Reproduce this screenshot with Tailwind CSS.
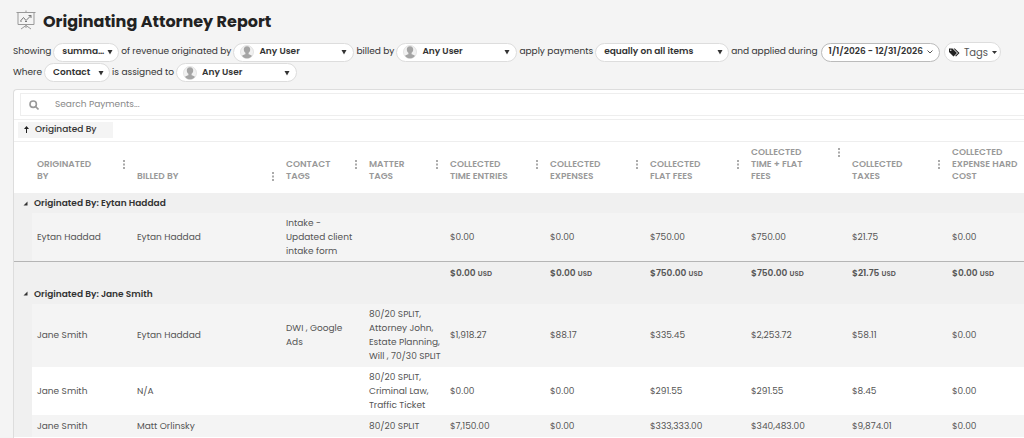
<!DOCTYPE html>
<html lang="en">
<head>
  <meta charset="UTF-8" />
  <meta name="viewport" content="width=device-width, initial-scale=1.0" />
  <title>Originating Attorney Report</title>
  <script src="https://cdn.jsdelivr.net/npm/@tailwindcss/browser@4"></script>
</head>
<body class="bg-[#f4f4f4] text-[#333] min-h-screen overflow-x-hidden font-['Poppins','Inter',sans-serif] text-[9px] flex flex-col">

  <!-- Shared icons -->
  <svg class="hidden">
    <symbol id="avatar" viewBox="0 0 14 14">
      <circle cx="7" cy="7" r="6.5" fill="#f1f1f1" stroke="#ddd" stroke-width="0.8" />
      <path d="M7 1.2c-2.200 0-3.200 1.400-3.200 3.300 0 1.500.7 2.700 1.600 3.300v1.400c-1.400.4-2.700.8-3.300 1.700C3.300 12.400 5 13.300 7 13.300s3.700-.9 4.900-2.400c-.6-.9-1.900-1.300-3.300-1.700V7.800c.9-.6 1.600-1.800 1.600-3.300 0-1.900-1-3.300-3.200-3.300z" fill="#a5a5a5" />
    </symbol>
    <symbol id="arrow" viewBox="0 0 6 6">
      <path d="M.5 1h5L3 5.500z" fill="#333" />
    </symbol>
    <symbol id="dots" viewBox="0 0 4 9">
      <path d="M1 0h2v2H1zM1 3.500h2v2H1zM1 7h2v2H1z" fill="#aaa" />
    </symbol>
    <symbol id="collapse" viewBox="0 0 5 5">
      <path d="M4.500.5v4h-4z" fill="#333" />
    </symbol>
  </svg>

  <!-- Title -->
  <header class="flex items-center gap-[7px] px-4 pt-2 h-[35px]">
    <svg class="size-5 mb-1" viewBox="0 0 20 20" fill="none" stroke="#999" stroke-width="1">
      <path d="M10 .5v2M.5 2.500h19M2 2.500v12h16v-12M10 14.500v3.500M10 15.500l-5 3.500M10 15.500l5 3.500" />
      <path d="M4.500 11l3-3.500 2.500 3 5-5M12.500 5.500H15V8M4.500 11.500h1M9 11.500h2" stroke="#777" />
    </svg>
    <h1 class="text-base font-bold text-[#222]">Originating Attorney Report</h1>
  </header>

  <!-- Filters -->
  <form class="flex flex-col gap-px pl-[13px] pt-[7px] pb-[7px]">
    <div class="flex items-center gap-[2px] whitespace-nowrap">
      <label for="view">Showing</label>
      <div class="flex items-center w-[66px] h-[19px] pl-2 pr-[5px] rounded-full border border-[#ddd] bg-white">
        <select id="view" class="appearance-none flex-1 min-w-0 truncate font-semibold outline-none">
          <option>summary</option>
          <option>details</option>
        </select>
        <svg class="size-[6px] ml-[2px] shrink-0"><use href="#arrow" /></svg>
      </div>
      <label for="originatedBy">of revenue originated by</label>
      <div class="flex items-center gap-[5px] w-[121px] h-[19px] px-[6px] rounded-full border border-[#ddd] bg-white">
        <svg class="size-[14px] shrink-0"><use href="#avatar" /></svg>
        <select id="originatedBy" class="appearance-none flex-1 min-w-0 font-semibold outline-none">
          <option>Any User</option>
        </select>
        <svg class="size-[6px] shrink-0"><use href="#arrow" /></svg>
      </div>
      <label for="billedBy">billed by</label>
      <div class="flex items-center gap-[5px] w-[121px] h-[19px] px-[6px] rounded-full border border-[#ddd] bg-white">
        <svg class="size-[14px] shrink-0"><use href="#avatar" /></svg>
        <select id="billedBy" class="appearance-none flex-1 min-w-0 font-semibold outline-none">
          <option>Any User</option>
        </select>
        <svg class="size-[6px] shrink-0"><use href="#arrow" /></svg>
      </div>
      <label for="apply">apply payments</label>
      <div class="flex items-center w-[134px] h-[19px] pl-2 pr-[5px] rounded-full border border-[#ddd] bg-white">
        <select id="apply" class="appearance-none flex-1 min-w-0 font-semibold outline-none">
          <option>equally on all items</option>
        </select>
        <svg class="size-[6px] shrink-0"><use href="#arrow" /></svg>
      </div>
      <label for="period">and applied during</label>
      <button id="period" type="button" class="flex items-center justify-between w-[119px] h-[19px] ml-[2px] px-[6px] rounded-full border border-[#bbb] bg-white font-semibold">
        1/1/2026 - 12/31/2026
        <svg class="size-[6px]" viewBox="0 0 6 6" fill="none" stroke="#555"><path d="M.5 1.500L3 4l2.500-2.500" /></svg>
      </button>
      <button type="button" class="flex items-center justify-center gap-1 w-[57px] h-5 ml-[2px] rounded-full border border-[#ddd] bg-white text-[10px] text-[#555]">
        <svg class="w-[11px] h-[9px]" viewBox="0 0 11 9" fill="#222">
          <path fill-rule="evenodd" d="M0 .5h3.500L8 5 4.500 8.500 0 4zM1.800 1.500a.7.700 0 1 0 0 1.400.7.700 0 0 0 0-1.400z" />
          <path d="M4.500.5h1.300L10.500 5 7 8.500l-.8-.7L9 5z" />
        </svg>
        Tags
        <svg class="w-[5px] h-[3px]" viewBox="0 0 5 3" fill="#333"><path d="M0 0h5L2.500 3z" /></svg>
      </button>
    </div>
    <div class="flex items-center gap-[2px] whitespace-nowrap">
      <label for="where">Where</label>
      <div class="flex items-center w-[66px] h-[19px] pl-2 pr-[5px] rounded-full border border-[#ddd] bg-white">
        <select id="where" class="appearance-none flex-1 min-w-0 font-semibold outline-none">
          <option>Contact</option>
          <option>Matter</option>
        </select>
        <svg class="size-[6px] shrink-0"><use href="#arrow" /></svg>
      </div>
      <label for="assignedTo">is assigned to</label>
      <div class="flex items-center gap-[5px] w-[121px] h-[19px] px-[6px] rounded-full border border-[#ddd] bg-white">
        <svg class="size-[14px] shrink-0"><use href="#avatar" /></svg>
        <select id="assignedTo" class="appearance-none flex-1 min-w-0 font-semibold outline-none">
          <option>Any User</option>
        </select>
        <svg class="size-[6px] shrink-0"><use href="#arrow" /></svg>
      </div>
    </div>
  </form>

  <!-- Report grid -->
  <main class="flex-1 ml-[13px] border-l border-t border-[#ddd] rounded-tl-sm bg-white">
    <div class="py-[3px] pl-[6px]">
      <div class="flex items-center gap-4 h-[23px] pl-2 border border-r-0 border-[#eee]">
        <svg class="size-[10px]" viewBox="0 0 10 10" fill="none" stroke="#999" stroke-width="1.600"><circle cx="4.200" cy="4.200" r="3.200" /><path d="M6.500 6.500l3 3" /></svg>
        <input type="search" aria-label="Search Payments" placeholder="Search Payments..." class="flex-1 outline-none placeholder:text-[#888]" />
      </div>
    </div>
    <div class="flex items-center h-[23px] pl-1 border-y border-[#eee]">
      <button type="button" class="flex items-center gap-[6px] w-[95px] h-4 mb-[2px] px-[6px] bg-[#f4f4f4] font-medium">
        <svg class="w-[5px] h-[7px]" viewBox="0 0 5 7" fill="#222"><path d="M2.500 0L5 3H3v4H2V3H0z" /></svg>
        Originated By
      </button>
    </div>

    <table class="table-fixed w-full text-left leading-[14px] text-[#555]">
      <colgroup>
        <col class="w-[18px]" />
        <col class="w-[100px]" />
        <col class="w-[149px]" />
        <col class="w-[83px]" />
        <col class="w-[81px]" />
        <col class="w-[100px]" />
        <col class="w-[100px]" />
        <col class="w-[101px]" />
        <col class="w-[101px]" />
        <col class="w-[100px]" />
        <col />
      </colgroup>
      <thead class="text-[#999] leading-3">
        <tr class="h-[51px] align-bottom">
          <th></th>
          <th class="pl-[5px] pr-[6px] pb-[11px] font-semibold"><div class="flex justify-between"><span>ORIGINATED<br />BY</span><svg class="w-1 h-[9px] mt-[2px] shrink-0"><use href="#dots" /></svg></div></th>
          <th class="pl-[5px] pr-[6px] pb-[11px] font-semibold"><div class="flex justify-between"><span>BILLED BY</span><svg class="w-1 h-[9px] mt-[2px] shrink-0"><use href="#dots" /></svg></div></th>
          <th class="pl-[5px] pr-[6px] pb-[11px] font-semibold"><div class="flex justify-between"><span>CONTACT<br />TAGS</span><svg class="w-1 h-[9px] mt-[2px] shrink-0"><use href="#dots" /></svg></div></th>
          <th class="pl-[5px] pr-[6px] pb-[11px] font-semibold"><div class="flex justify-between"><span>MATTER<br />TAGS</span><svg class="w-1 h-[9px] mt-[2px] shrink-0"><use href="#dots" /></svg></div></th>
          <th class="pl-[5px] pr-[6px] pb-[11px] font-semibold"><div class="flex justify-between"><span>COLLECTED<br />TIME ENTRIES</span><svg class="w-1 h-[9px] mt-[2px] shrink-0"><use href="#dots" /></svg></div></th>
          <th class="pl-[5px] pr-[6px] pb-[11px] font-semibold"><div class="flex justify-between"><span>COLLECTED<br />EXPENSES</span><svg class="w-1 h-[9px] mt-[2px] shrink-0"><use href="#dots" /></svg></div></th>
          <th class="pl-[5px] pr-[6px] pb-[11px] font-semibold"><div class="flex justify-between"><span>COLLECTED<br />FLAT FEES</span><svg class="w-1 h-[9px] mt-[2px] shrink-0"><use href="#dots" /></svg></div></th>
          <th class="pl-[5px] pr-[6px] pb-[11px] font-semibold"><div class="flex justify-between"><span>COLLECTED<br />TIME + FLAT<br />FEES</span><svg class="w-1 h-[9px] mt-[2px] shrink-0"><use href="#dots" /></svg></div></th>
          <th class="pl-[5px] pr-[6px] pb-[11px] font-semibold"><div class="flex justify-between"><span>COLLECTED<br />TAXES</span><svg class="w-1 h-[9px] mt-[2px] shrink-0"><use href="#dots" /></svg></div></th>
          <th class="pl-[5px] pb-[11px] font-semibold whitespace-nowrap">COLLECTED<br />EXPENSE HARD<br />COST</th>
        </tr>
      </thead>
      <tbody>
        <tr class="h-5 bg-[#f0f0f0] text-[#333]">
          <td colspan="11" class="pl-[9px] font-semibold"><div class="flex items-center gap-[6px]"><svg class="size-[5px]"><use href="#collapse" /></svg>Originated By: Eytan Haddad</div></td>
        </tr>
        <tr class="bg-[#f4f4f4]">
          <td class="bg-[#f0f0f0]"></td>
          <td class="px-[5px] py-[3px]">Eytan Haddad</td>
          <td class="px-[5px] py-[3px]">Eytan Haddad</td>
          <td class="px-[5px] py-[3px]">Intake -<br />Updated client<br />intake form</td>
          <td class="px-[5px] py-[3px]"></td>
          <td class="px-[5px] py-[3px]">$0.00</td>
          <td class="px-[5px] py-[3px]">$0.00</td>
          <td class="px-[5px] py-[3px]">$750.00</td>
          <td class="px-[5px] py-[3px]">$750.00</td>
          <td class="px-[5px] py-[3px]">$21.75</td>
          <td class="px-[5px] py-[3px]">$0.00</td>
        </tr>
        <tr class="h-[22px] bg-[#f0f0f0] border-t border-[#b5b5b5] font-semibold">
          <td colspan="5"></td>
          <td class="px-[5px] pt-[2px]">$0.00 <span class="text-[7px]">USD</span></td>
          <td class="px-[5px] pt-[2px]">$0.00 <span class="text-[7px]">USD</span></td>
          <td class="px-[5px] pt-[2px]">$750.00 <span class="text-[7px]">USD</span></td>
          <td class="px-[5px] pt-[2px]">$750.00 <span class="text-[7px]">USD</span></td>
          <td class="px-[5px] pt-[2px]">$21.75 <span class="text-[7px]">USD</span></td>
          <td class="px-[5px] pt-[2px]">$0.00 <span class="text-[7px]">USD</span></td>
        </tr>
      </tbody>
      <tbody>
        <tr class="h-5 bg-[#f0f0f0] text-[#333]">
          <td colspan="11" class="pl-[9px] font-semibold"><div class="flex items-center gap-[6px]"><svg class="size-[5px]"><use href="#collapse" /></svg>Originated By: Jane Smith</div></td>
        </tr>
        <tr class="h-[63px] bg-[#f4f4f4]">
          <td class="bg-[#f0f0f0]"></td>
          <td class="px-[5px] py-[3px]">Jane Smith</td>
          <td class="px-[5px] py-[3px]">Eytan Haddad</td>
          <td class="px-[5px] py-[3px]">DWI , Google<br />Ads</td>
          <td class="pl-[5px] py-[3px] whitespace-nowrap">80/20 SPLIT,<br />Attorney John,<br />Estate Planning,<br />Will , 70/30 SPLIT</td>
          <td class="px-[5px] py-[3px]">$1,918.27</td>
          <td class="px-[5px] py-[3px]">$88.17</td>
          <td class="px-[5px] py-[3px]">$335.45</td>
          <td class="px-[5px] py-[3px]">$2,253.72</td>
          <td class="px-[5px] py-[3px]">$58.11</td>
          <td class="px-[5px] py-[3px]">$0.00</td>
        </tr>
        <tr class="bg-white">
          <td class="bg-[#f0f0f0]"></td>
          <td class="px-[5px] py-[3px]">Jane Smith</td>
          <td class="px-[5px] py-[3px]">N/A</td>
          <td class="px-[5px] py-[3px]"></td>
          <td class="pl-[5px] py-[3px] whitespace-nowrap">80/20 SPLIT,<br />Criminal Law,<br />Traffic Ticket</td>
          <td class="px-[5px] py-[3px]">$0.00</td>
          <td class="px-[5px] py-[3px]">$0.00</td>
          <td class="px-[5px] py-[3px]">$291.55</td>
          <td class="px-[5px] py-[3px]">$291.55</td>
          <td class="px-[5px] py-[3px]">$8.45</td>
          <td class="px-[5px] py-[3px]">$0.00</td>
        </tr>
        <tr class="h-[22px] bg-[#f4f4f4]">
          <td class="bg-[#f0f0f0]"></td>
          <td class="px-[5px] py-[3px]">Jane Smith</td>
          <td class="px-[5px] py-[3px]">Matt Orlinsky</td>
          <td class="px-[5px] py-[3px]"></td>
          <td class="px-[5px] py-[3px]">80/20 SPLIT</td>
          <td class="px-[5px] py-[3px]">$7,150.00</td>
          <td class="px-[5px] py-[3px]">$0.00</td>
          <td class="px-[5px] py-[3px]">$333,333.00</td>
          <td class="px-[5px] py-[3px]">$340,483.00</td>
          <td class="px-[5px] py-[3px]">$9,874.01</td>
          <td class="px-[5px] py-[3px]">$0.00</td>
        </tr>
      </tbody>
    </table>
  </main>
</body>
</html>
